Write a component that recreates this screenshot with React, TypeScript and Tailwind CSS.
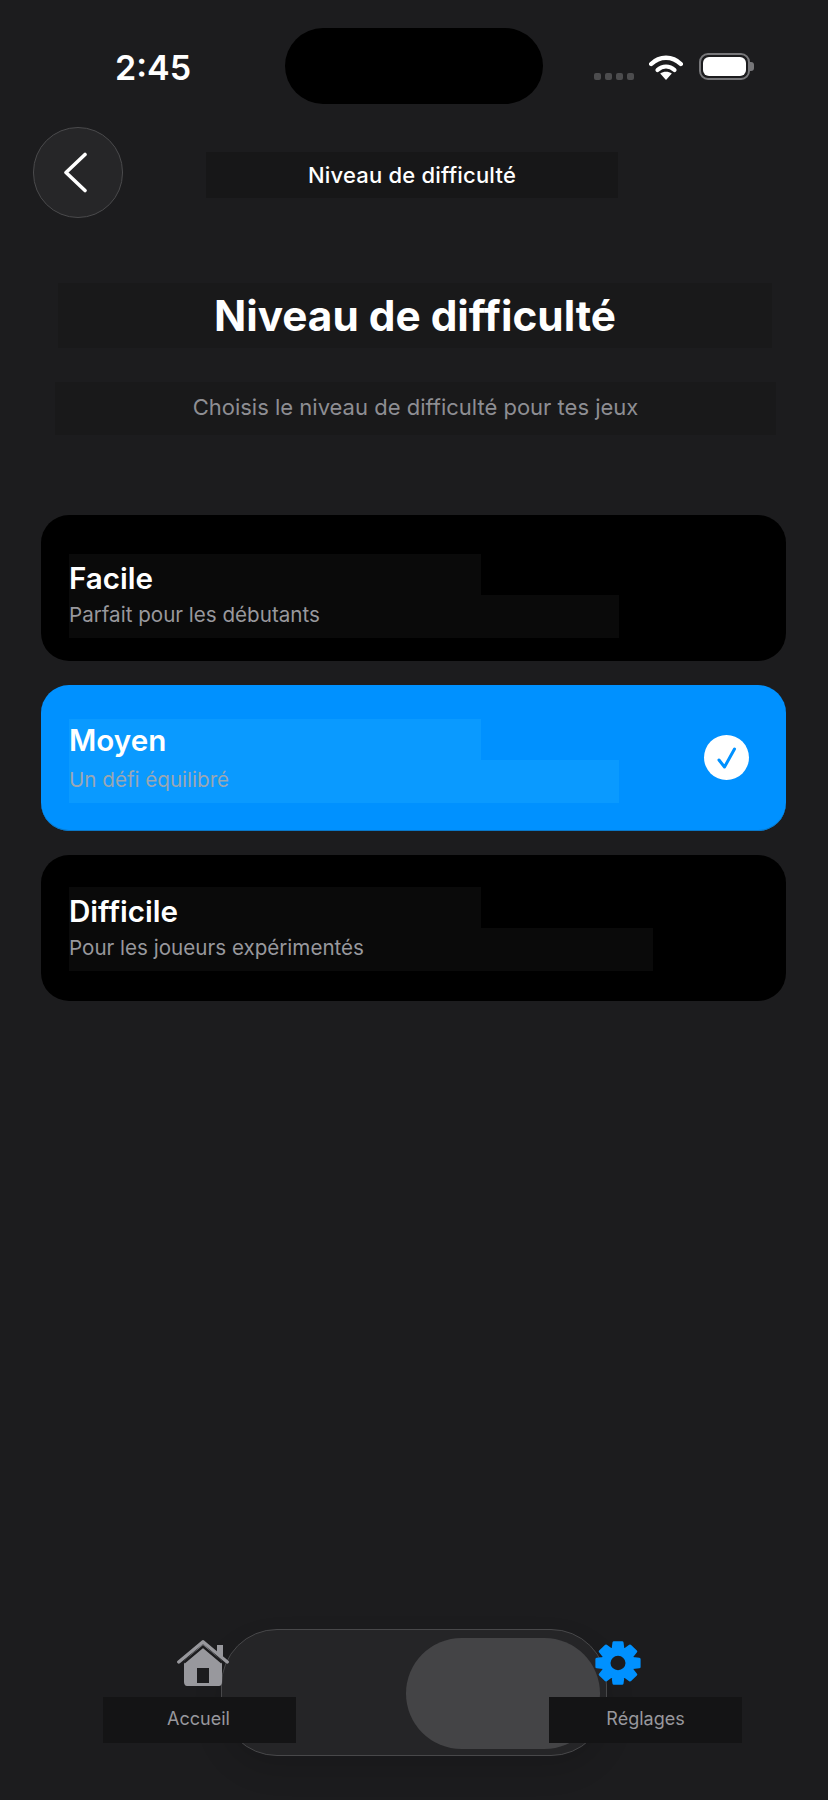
import React from 'react';

interface Level {
  name: string;
  hint: string;
  top: string;
  hintWidth: string;
  selected?: boolean;
}

const levels: Level[] = [
  { name: 'Facile', hint: 'Parfait pour les débutants', top: 'pt-[39px]', hintWidth: 'w-[550px]' },
  { name: 'Moyen', hint: 'Un défi équilibré', top: 'pt-[34px]', hintWidth: 'w-[550px]', selected: true },
  { name: 'Difficile', hint: 'Pour les joueurs expérimentés', top: 'pt-[32px]', hintWidth: 'w-[584px]' },
];

const gearPath = (() => {
  const points: string[] = [];
  for (let i = 0; i < 8; i++) {
    const a = (i * Math.PI) / 4 - Math.PI / 2;
    const pt = (r: number, d: number) =>
      `${(24 + r * Math.cos(a + d)).toFixed(2)} ${(24 + r * Math.sin(a + d)).toFixed(2)}`;
    points.push(pt(15.5, -0.32), pt(21.5, -0.19), pt(21.5, 0.19), pt(15.5, 0.32));
  }
  return `M${points.join('L')}Z`;
})();

const StatusBar = () => (
  <div className="flex items-start pt-[28px]">
    <div className="w-[285px] pl-[115px] pt-[20px] text-[34px] leading-[40px] font-semibold text-white">2:45</div>
    <div className="w-[258px] h-[76px] rounded-[38px] bg-black" />
    <div className="flex items-start pl-[51px]">
      <div className="flex gap-[4px] pt-[45px]">
        {[0, 1, 2, 3].map((i) => (
          <div key={i} className="w-[7px] h-[7px] rounded-[2px] bg-[#4c4c4e]" />
        ))}
      </div>
      <svg className="ml-[15px] mt-[27px]" width="34" height="25" viewBox="0 0 34 25" fill="none">
        <path d="M2.2 9C10.5 0.6 23.5 0.6 31.8 9" stroke="#fff" strokeWidth="4.4" strokeLinecap="round" />
        <path d="M8.5 15C13.5 10.3 20.5 10.3 25.5 15" stroke="#fff" strokeWidth="4.2" strokeLinecap="round" />
        <path d="M17 25L11.2 18.6C14.4 16 19.6 16 22.8 18.6Z" fill="#fff" />
      </svg>
      <div className="ml-[16px] mt-[25px] flex items-center">
        <div className="w-[51px] h-[27px] rounded-[9px] border-[2px] border-[#77777a] p-[2px]">
          <div className="w-full h-full rounded-[6px] bg-white" />
        </div>
        <div className="w-[4px] h-[9px] rounded-r-[3px] bg-[#77777a]" />
      </div>
    </div>
  </div>
);

const Header = () => (
  <div className="flex items-start mt-[23px] pl-[33px]">
    <button className="w-[90px] h-[91px] rounded-full bg-[#262628] border border-[#4a4a4c] flex items-center justify-center">
      <svg width="26" height="41" viewBox="0 0 26 41" fill="none" className="mr-[7px]">
        <path d="M23 2.5L4 20.5L23 38.5" stroke="#fff" strokeWidth="3.6" strokeLinecap="round" strokeLinejoin="round" />
      </svg>
    </button>
    <div className="ml-[83px] mt-[25px] w-[412px] h-[46px] bg-[#171718] flex items-center justify-center text-[22px] tracking-[0.2px] font-medium text-white">
      Niveau de difficulté
    </div>
  </div>
);

const LevelCard = ({ level }: { level: Level }) => (
  <div
    className={`relative h-[146px] rounded-[28px] pl-[28px] ${level.top} ${
      level.selected ? 'bg-[#0091ff] shadow-[inset_0_-1px_0_#0a78c8]' : 'bg-black'
    }`}
  >
    <div className={`w-[412px] h-[41px] ${level.selected ? 'bg-[#0a9aff]' : 'bg-[#0a0a0a]'}`}>
      <div className={`text-[29.6px] leading-[34px] font-semibold text-white ${level.selected ? 'pt-[4px]' : 'pt-[7px]'}`}>
        {level.name}
      </div>
    </div>
    <div className={`${level.hintWidth} h-[43px] ${level.selected ? 'bg-[#0a9aff]' : 'bg-[#0a0a0a]'}`}>
      <div className={`pt-[7px] text-[20.6px] leading-[26px] ${level.selected ? 'text-[#9ba7b3]' : 'text-[#98989d]'}`}>
        {level.hint}
      </div>
    </div>
    {level.selected && (
      <div className="absolute right-[37px] top-[50px] w-[45px] h-[45px] rounded-full bg-white flex items-center justify-center">
        <svg width="24" height="24" viewBox="0 0 24 24" fill="none">
          <path d="M4 14L9.5 21L19.5 3" stroke="#0091ff" strokeWidth="3" strokeLinecap="round" strokeLinejoin="round" />
        </svg>
      </div>
    )}
  </div>
);

const TabLabel = ({ children, className }: { children: string; className: string }) => (
  <div className={`w-[193px] h-[46px] bg-[#141415] flex justify-center text-[18px] leading-[44px] text-[#98989d] ${className}`}>
    {children}
  </div>
);

const TabBar = () => (
  <div className="relative mt-auto h-[171px] pt-[11px]">
    <div className="absolute left-[221px] top-0 w-[386px] h-[127px] rounded-[56px] bg-[#252527] border border-[#48484a] shadow-[0_14px_30px_rgba(0,0,0,0.12)] pt-[8px] pr-[6px] flex justify-end">
      <div className="w-[194px] h-[111px] rounded-[56px] bg-[#444446]" />
    </div>
    <div className="relative flex pl-[103px]">
      <div className="w-[193px] flex flex-col">
        <svg className="ml-[74px]" width="52" height="46" viewBox="0 0 52 46" fill="none">
          <path d="M40 5h6v14l-6-5z" fill="#98989d" />
          <path d="M7 21L26 4L45 21V42C45 44 44 46 42 46H10C8 46 7 44 7 42Z" fill="#98989d" />
          <path d="M1.8 22L26 1.8L50.2 22" stroke="#98989d" strokeWidth="3.4" strokeLinecap="round" strokeLinejoin="round" />
          <path d="M7 22.5L26 6.5L45 22.5" stroke="#1c1c1e" strokeWidth="2.4" />
          <rect x="20" y="28" width="12" height="15" fill="#1c1c1e" />
        </svg>
        <TabLabel className="mt-[11px] pr-[2px]">Accueil</TabLabel>
      </div>
      <div className="ml-[253px] w-[193px] flex flex-col">
        <svg className="ml-[45px]" width="48" height="46" viewBox="0 0 48 48" fill="none" preserveAspectRatio="none">
          <path d={gearPath} fill="#0091ff" stroke="#0091ff" strokeWidth="3" strokeLinejoin="round" />
          <circle cx="24" cy="24" r="7.5" fill="#1c1c1e" />
        </svg>
        <TabLabel className="mt-[11px]">Réglages</TabLabel>
      </div>
    </div>
  </div>
);

export default function App() {
  return (
    <div className="w-[828px] h-[1800px] bg-[#1c1c1e] flex flex-col font-['Inter',sans-serif] overflow-hidden">
      <StatusBar />
      <Header />
      <div className="mt-[65px] ml-[58px] w-[714px] h-[65px] bg-[#19191a] flex items-center justify-center text-[42.3px] font-bold text-white">
        Niveau de difficulté
      </div>
      <div className="mt-[34px] ml-[55px] w-[721px] h-[53px] pb-[3px] bg-[#19191a] flex items-center justify-center text-[22px] text-[#8e8e93]">
        Choisis le niveau de difficulté pour tes jeux
      </div>
      <div className="mt-[80px] ml-[41px] w-[745px] flex flex-col gap-[24px]">
        {levels.map((level) => (
          <LevelCard key={level.name} level={level} />
        ))}
      </div>
      <TabBar />
    </div>
  );
}
